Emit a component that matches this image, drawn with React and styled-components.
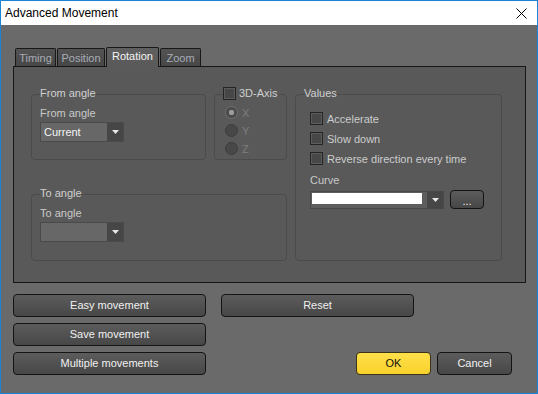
import React from "react"
import styled, { createGlobalStyle } from "styled-components"

const GlobalStyle = createGlobalStyle`
  html, body {
    margin: 0;
    padding: 0;
    background: #6a6a6a;
  }
  body {
    font-family: "Liberation Sans", Arial, sans-serif;
    font-size: 11px;
  }
  * {
    box-sizing: border-box;
  }
`

const tabs = [
  { name: "Timing", width: 41 },
  { name: "Position", width: 48 },
  { name: "Rotation", width: 53, active: true },
  { name: "Zoom", width: 41 },
]

const Arrow = () => (
  <svg width="7" height="4" viewBox="0 0 7 4">
    <polygon points="0,0 7,0 3.5,4" fill="#e8e8e8" />
  </svg>
)

const CloseIcon = () => (
  <svg width="11" height="11" viewBox="0 0 11 11">
    <path d="M0.5 0.5 L10.5 10.5 M10.5 0.5 L0.5 10.5" stroke="#000" strokeWidth="1" />
  </svg>
)

const App = () => {
  return (
    <>
      <GlobalStyle />
      <Window>
        <TitleBar>
          <span>Advanced Movement</span>
          <CloseIcon />
        </TitleBar>

        <Body>
          <TabRow>
            {tabs.map(t => (
              <Tab key={t.name} $w={t.width} $active={t.active}>
                {t.name}
              </Tab>
            ))}
          </TabRow>

          <Panel>
            <Group>
              <Legend>From angle</Legend>
              <FieldLabel>From angle</FieldLabel>
              <Combo $w={84} $h={20}>
                <ComboText>Current</ComboText>
                <ComboArrow><Arrow /></ComboArrow>
              </Combo>
            </Group>

            <Group>
              <Legend>
                <Check />
                <span>3D-Axis</span>
              </Legend>
              <RadioList>
                {["X", "Y", "Z"].map((l, i) => (
                  <RadioRow key={l}>
                    <Radio $on={i === 0} />
                    <span>{l}</span>
                  </RadioRow>
                ))}
              </RadioList>
            </Group>

            <ValuesGroup>
              <Legend>Values</Legend>
              <ValuesInner>
                <CheckList>
                  <CheckRow><Check /><span>Accelerate</span></CheckRow>
                  <CheckRow><Check /><span>Slow down</span></CheckRow>
                  <CheckRow><Check /><span>Reverse direction every time</span></CheckRow>
                </CheckList>
                <CurveLabel>Curve</CurveLabel>
                <CurveRow>
                  <CurveCombo>
                    <WhiteField />
                    <ComboArrow><Arrow /></ComboArrow>
                  </CurveCombo>
                  <DotsButton>...</DotsButton>
                </CurveRow>
              </ValuesInner>
            </ValuesGroup>

            <ToGroup>
              <Legend>To angle</Legend>
              <FieldLabel>To angle</FieldLabel>
              <Combo $w={84} $h={20}>
                <ComboText />
                <ComboArrow><Arrow /></ComboArrow>
              </Combo>
            </ToGroup>
          </Panel>

          <Footer>
            <LeftButton>Easy movement</LeftButton>
            <ResetButton>Reset</ResetButton>
            <LeftButton>Save movement</LeftButton>
            <LeftButton>Multiple movements</LeftButton>
            <DialogButtons>
              <Button $w={75} $primary>OK</Button>
              <Button $w={75}>Cancel</Button>
            </DialogButtons>
          </Footer>
        </Body>
      </Window>
    </>
  )
}

export default App


const Window = styled.div`
  width: 538px;
  height: 394px;
  border: 1px solid #1883d7;
  display: flex;
  flex-direction: column;
  background: #6a6a6a;
`

const TitleBar = styled.div`
  height: 24px;
  background: #fff;
  color: #000;
  font-size: 12px;
  display: flex;
  align-items: center;
  justify-content: space-between;
  padding: 0 10px 0 4px;
`

const Body = styled.div`
  flex: 1;
  padding: 22px 11px 0 12px;
  display: flex;
  flex-direction: column;
`

const TabRow = styled.div`
  display: flex;
  align-items: flex-end;
  gap: 1px;
  padding-left: 2px;
  position: relative;
  z-index: 1;
`

const Tab = styled.div`
  width: ${p => p.$w}px;
  height: ${p => (p.$active ? 20 : 18)}px;
  margin-bottom: ${p => (p.$active ? -1 : 0)}px;
  border: 1px solid #181818;
  border-bottom: none;
  border-radius: 2px 2px 0 0;
  background: ${p =>
    p.$active ? "linear-gradient(#606060, #595959)" : "linear-gradient(#535353, #474747)"};
  color: ${p => (p.$active ? "#f4f4f4" : "#a9adb8")};
  text-align: center;
  line-height: 17px;
  padding-top: ${p => (p.$active ? 0 : 1)}px;
`

const Panel = styled.div`
  width: 513px;
  height: 217px;
  border: 1px solid #161616;
  background: #595959;
  padding: 19px 0 0 17px;
  display: grid;
  grid-template-columns: 175px 73px 207px;
  grid-template-rows: 74px 75px;
  column-gap: 8px;
  row-gap: 26px;
`

const Group = styled.fieldset`
  margin: 0;
  padding: 0 8px;
  min-width: 0;
  border: 1px solid #4b4b4b;
  border-radius: 4px;
  color: #c9c9c9;
`

const ValuesGroup = styled(Group)`
  grid-column: 3;
  grid-row: 1 / span 2;
`

const ToGroup = styled(Group)`
  grid-column: 1 / span 2;
  grid-row: 2;
`

const Legend = styled.legend`
  padding: 0 0 2px 0;
  line-height: 14px;
  color: #d0d0d0;
  display: flex;
  align-items: center;
  gap: 3px;
`

const FieldLabel = styled.div`
  margin-top: 5px;
  line-height: 13px;
  color: #c9c9c9;
`

const Combo = styled.div`
  margin-top: 2px;
  width: ${p => p.$w}px;
  height: ${p => p.$h}px;
  border: 1px solid #4a4a4a;
  background: #676767;
  display: flex;
`

const ComboText = styled.div`
  flex: 1;
  padding-left: 3px;
  color: #f4f4f4;
  line-height: 18px;
`

const ComboArrow = styled.div`
  width: 16px;
  background: #464646;
  display: flex;
  align-items: center;
  justify-content: center;
`

const Check = styled.div`
  width: 13px;
  height: 13px;
  border: 1px solid #242424;
  background: #474747;
  box-shadow: inset 0 0 0 1px #5c5c5c;
  flex-shrink: 0;
`

const RadioList = styled.div`
  margin: 4px 0 0 2px;
  display: flex;
  flex-direction: column;
  gap: 5px;
`

const RadioRow = styled.div`
  display: flex;
  align-items: center;
  gap: 4px;
  height: 13px;
  color: #7e7e7e;
`

const Radio = styled.div`
  width: 13px;
  height: 13px;
  border-radius: 50%;
  border: 1px solid ${p => (p.$on ? "#6e6e6e" : "#3d3d3d")};
  background: ${p =>
    p.$on ? "radial-gradient(circle, #9a9a9a 0 2.5px, #4a4a4a 3px)" : "#484848"};
`

const ValuesInner = styled.div`
  padding-left: 6px;
`

const CheckList = styled.div`
  margin-top: 10px;
  display: flex;
  flex-direction: column;
  gap: 7px;
`

const CheckRow = styled.div`
  display: flex;
  align-items: center;
  gap: 4px;
  height: 13px;
  color: #cccccc;
`

const CurveLabel = styled.div`
  margin-top: 9px;
  line-height: 13px;
  color: #c9c9c9;
`

const CurveRow = styled.div`
  margin-top: 3px;
  display: flex;
  align-items: flex-start;
  gap: 6px;
`

const CurveCombo = styled.div`
  margin-top: 1px;
  width: 134px;
  height: 18px;
  border: 1px solid #484848;
  background: #5d5d5d;
  display: flex;
  justify-content: space-between;
`

const WhiteField = styled.div`
  margin: 1px;
  width: 110px;
  height: 11px;
  background: #fff;
`

const DotsButton = styled.div`
  width: 34px;
  height: 19px;
  border: 1px solid #141414;
  border-radius: 4px;
  background: linear-gradient(#5c5c5c, #474747);
  color: #f0f0f0;
  text-align: center;
  line-height: 21px;
`

const Footer = styled.div`
  margin-top: 11px;
  display: grid;
  grid-template-columns: 193px 193px 1fr;
  grid-template-rows: 23px 23px 23px;
  column-gap: 15px;
  row-gap: 6px;
  padding-right: 14px;
`

const Button = styled.div`
  width: ${p => p.$w || 193}px;
  height: 23px;
  border: 1px solid ${p => (p.$primary ? "#3a3318" : "#141414")};
  border-radius: 4px;
  background: ${p =>
    p.$primary ? "linear-gradient(#ffe04a, #f8d12c)" : "linear-gradient(#5c5c5c, #474747)"};
  color: ${p => (p.$primary ? "#111" : "#f0f0f0")};
  text-align: center;
  line-height: 21px;
`

const LeftButton = styled(Button)`
  grid-column: 1;
`

const ResetButton = styled(Button)`
  grid-column: 2;
  grid-row: 1;
`

const DialogButtons = styled.div`
  grid-column: 2 / span 2;
  grid-row: 3;
  justify-self: end;
  display: flex;
  gap: 6px;
`
